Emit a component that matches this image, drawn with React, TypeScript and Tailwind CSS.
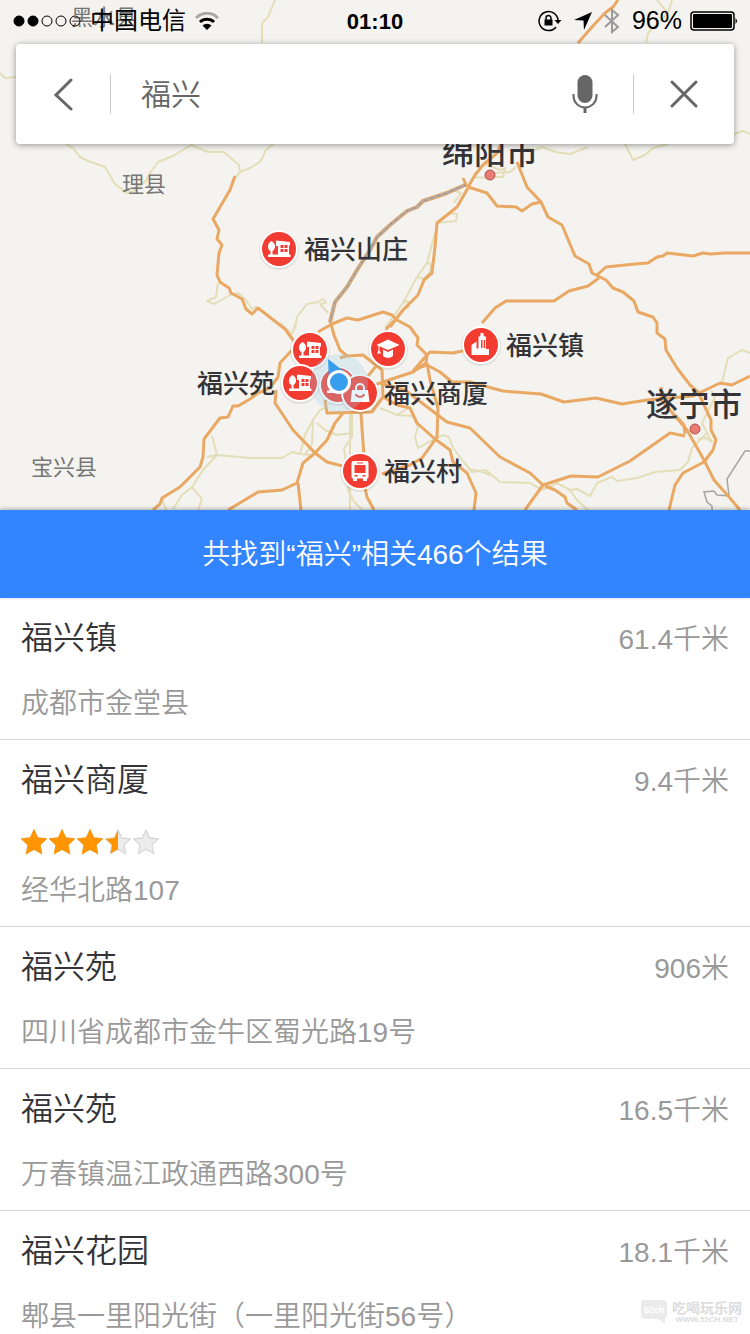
import type { ReactNode } from 'react'

type PinKind = 'house' | 'school' | 'town' | 'shop' | 'bus'

interface Pin {
  x: number
  y: number
  kind: PinKind
  label?: string
  labelX?: number
}

interface Place {
  id: number
  name: string
  distance: string
  address: string
  rating?: number
}

const places: Place[] = [
  { id: 1, name: '福兴镇', distance: '61.4千米', address: '成都市金堂县' },
  { id: 2, name: '福兴商厦', distance: '9.4千米', address: '经华北路107', rating: 3.5 },
  { id: 3, name: '福兴苑', distance: '906米', address: '四川省成都市金牛区蜀光路19号' },
  { id: 4, name: '福兴苑', distance: '16.5千米', address: '万春镇温江政通西路300号' },
  { id: 5, name: '福兴花园', distance: '18.1千米', address: '郫县一里阳光街（一里阳光街56号）' },
]

const pins: Pin[] = [
  { x: 279, y: 249, kind: 'house', label: '福兴山庄', labelX: 304 },
  { x: 310, y: 350, kind: 'house' },
  { x: 388, y: 349, kind: 'school' },
  { x: 481, y: 345, kind: 'town', label: '福兴镇', labelX: 506 },
  { x: 300, y: 383, kind: 'house', label: '福兴苑', labelX: 197 },
  { x: 338, y: 385, kind: 'house' },
  { x: 360, y: 393, kind: 'shop', label: '福兴商厦', labelX: 384 },
  { x: 360, y: 471, kind: 'bus', label: '福兴村', labelX: 384 },
]

const minorRoads = [
  '66,144 73,148 80,157 88,161 105,167 115,184 127,193 135,190 146,181 150,173 158,162 173,156 191,145 208,152 224,152 239,165 240,172 235,178',
  '240,172 250,168 260,162 266,150 273,144',
  '275,0 268,17 262,23 262,43',
  '0,73 5,78 16,77',
  '657,0 668,13 672,0',
  '668,13 648,33 646,43',
  '734,134 743,131 750,134',
  '218,283 216,297 207,301 214,304 230,295 238,293 246,300 252,309 257,306',
  '212,436 217,455 207,457',
  '217,455 250,458 282,458 292,452 300,454 305,435 313,420 320,410 327,407',
  '300,454 312,455',
  '217,455 203,470 192,487 202,499 198,510',
  '192,487 182,495 173,509',
  '162,498 166,510',
  '317,423 325,430 337,435 352,433',
  '352,414 352,437 344,448 347,470 348,490 355,503 363,510',
  '350,414 350,510',
  '313,420 312,444 305,455',
  '380,408 397,415 413,416 418,427 415,437 418,448 427,443 443,435 449,437 453,448 463,461 472,472 486,470 500,482 530,483 542,490 557,483 570,490 577,489 590,496 597,483 612,477 617,481 637,478 655,472 680,470 688,462 692,448 707,433 702,423 715,397 711,390',
  '397,415 407,409',
  '468,469 480,471 490,475',
  '722,382 728,358 742,350 750,353',
  '570,490 577,500 588,510',
  '526,148 535,150 542,147 556,152 570,154 588,147',
  '625,144 633,160 645,155 653,148 668,144',
  '295,329 297,317 307,304 318,302 323,299 326,303 320,304 328,313',
  '435,233 427,263 417,277 403,303 385,328',
  '427,263 431,264 430,272 424,279 417,277',
  '403,303 408,301 409,307 400,312',
  '437,223 456,221 457,214 448,213',
  '450,189 461,193 454,203',
  '474,177 487,178 495,173 510,172 516,167',
  '485,164 500,170 505,168 503,177 495,177',
  '280,323 292,334 296,322',
  '707,433 712,442 706,438 698,439',
]

const majorRoads = [
  '235,176 230,190 213,219 219,230 217,239 222,245 219,253 217,275 220,282 229,288 231,293 242,299 246,309 252,314 258,308 285,329 293,340 300,350',
  '300,346 292,350 280,363 278,377 270,388 258,393 250,399 238,406 233,406 228,417 220,418 204,439 203,457 200,467 180,487 162,498 160,504 153,510',
  '276,390 275,403 293,430 315,453 327,462 350,468',
  '343,413 335,423 327,440 315,453 303,463 297,483 282,490 258,492 228,510',
  '298,483 301,510',
  '340,358 347,356 363,355 382,370 383,397 372,412 327,413 325,400',
  '330,320 334,335 340,350 347,356',
  '318,332 332,324 347,318 358,320 383,312 392,315 397,320 410,327 418,338 417,345 427,355 426,363 413,372 380,383 360,390',
  '395,320 387,328 383,340',
  '377,365 368,376 358,383',
  '427,355 430,352 453,353 467,350',
  '427,355 413,371',
  '482,323 495,308 506,301 554,301 569,291 588,286 599,278',
  '596,276 606,267 635,264 648,263 657,257 663,256 667,253 693,256 703,253 710,254 725,253 750,253',
  '517,162 527,187 541,202 548,217 562,225 575,256 589,264 592,273 606,280 613,288 623,292 634,301 638,312 653,317 657,323 657,333 665,339 666,350 677,368 690,385 698,392 711,420 711,430 716,440 713,450 704,462 683,473 675,485 669,510',
  '468,187 487,193 497,206 516,207 522,211 532,204 541,202',
  '468,187 475,175 483,165 497,153 503,140',
  '463,178 467,187',
  '578,43 592,27 605,13 613,7 618,0',
  '468,188 457,207 437,223 435,247 432,273 424,280 418,295 403,310 390,327',
  '418,368 427,365 440,372 452,382 470,382 488,387 503,391 541,394 564,402 596,398 622,404 647,400 693,396 720,383 732,385 750,376',
  '383,397 397,405 410,408 417,423 435,439 450,450 453,462 467,473 476,493 474,510',
  '427,363 430,380 438,408 437,437 422,458 410,465 382,474',
  '380,383 405,390 418,400 447,422 470,428 500,457 530,473 543,485 525,510',
  '543,485 571,476 598,477 630,461 670,433 685,436',
  '545,486 555,490 565,497 567,503 577,510',
  '661,387 661,400 670,410 687,430 704,460 714,480 729,497 740,510',
  '676,416 684,425 685,434',
  '361,413 364,457',
  '365,488 367,497 374,510',
]

const railway =
  '465,185 447,193 423,201 417,207 407,211 390,225 377,237 370,250 357,270 347,287 335,302 330,322'

const starPath = 'M12 1l3.4 7.2 7.9 1-5.8 5.5 1.5 7.8-7-3.8-7 3.8 1.5-7.8L.7 9.2l7.9-1z'

function HouseGlyph() {
  return (
    <>
      <path d="M-7.500-8q4 2 3.500 6.500Q-5 1.500-6.500 2v4h-2V2Q-10.500 1.500-11-1.500-11.500-6-7.500-8z" />
      <path d="M-11 5.500H11.500V8H-11z" />
      <path d="M-3-8.500L11-7v3.500h-1V7H-1V-3h-2z" />
      <path d="M1.500-4h3v3h-3zM5.500-4h3v3h-3zM1.500 0h3v3h-3zM5.500 0h3v3h-3z" fill="#f23c32" />
    </>
  )
}

function SchoolGlyph() {
  return (
    <>
      <path d="M0-9.500L11.500-4 0 1-11.500-4z" />
      <path d="M-9.500-4v5.500l-1.500 3h4l-1.500-3V-3z" />
      <path d="M-5 .5l5 2.500L5 .5V7q-5 4-10 0z" />
    </>
  )
}

function TownGlyph() {
  return (
    <>
      <path d="M-9.500 0l5-3.500v7h2V-8l2-1.500V-12h3v2.500L5-8V4h3v6H-9.500z" />
      <path d="M0-5h1.500v8H0zM2.700-5h1.500v8H2.700z" fill="#f23c32" />
    </>
  )
}

function ShopGlyph() {
  return (
    <>
      <path d="M-8-3H8L9.500 9h-19z" />
      <path d="M-4-2v-3a4 4 0 0 1 8 0v3" fill="none" stroke="#fff" strokeWidth="2" />
      <path d="M-4.500 1.500q4.500 5 9 0" fill="none" stroke="#f23c32" strokeWidth="2" />
    </>
  )
}

function BusGlyph() {
  return (
    <>
      <path d="M-6.500-10H6.500Q8.500-10 8.500-8V6q0 1.500-1.500 1.500V10H3V7.500h-6V10h-4V7.500Q-8.500 7.500-8.500 6V-8q0-2 2-2z" />
      <path d="M-5.500-6h11V2h-11zM-3-8.500h6v1h-6zM-5.500 4h3v1.500h-3zM2.500 4h3v1.500h-3z" fill="#f23c32" />
    </>
  )
}

const glyphs: Record<PinKind, ReactNode> = {
  house: <HouseGlyph />,
  school: <SchoolGlyph />,
  town: <TownGlyph />,
  shop: <ShopGlyph />,
  bus: <BusGlyph />,
}

function MapView() {
  return (
    <svg
      viewBox="0 0 750 510"
      preserveAspectRatio="xMidYMid slice"
      className="col-start-1 row-start-1 h-full w-full bg-[#f4f3ef]"
      role="img"
      aria-label="地图"
    >
      <g fill="none" stroke="#e4deb8" strokeWidth="2" strokeLinejoin="round">
        {minorRoads.map((points) => (
          <polyline key={points} points={points} />
        ))}
      </g>
      <polyline
        points="750,451 745,451 727,479 729,496 717,495 714,491 704,492 707,502 712,506 712,510"
        fill="none"
        stroke="#a5a5a5"
        strokeWidth="1.5"
      />
      <g fill="none" stroke="#e9a863" strokeWidth="3" strokeLinejoin="round">
        {majorRoads.map((points) => (
          <polyline key={points} points={points} />
        ))}
        <polyline points={railway} strokeWidth="4" />
        <polyline points={railway} stroke="#b5a9a0" strokeWidth="2.5" />
        <polyline points={railway} stroke="#8d6b66" strokeWidth="1" strokeDasharray="1 6" />
      </g>

      <g fill="#777" fontSize="22">
        <text x="71" y="25">黑水县</text>
        <text x="122" y="192">理县</text>
        <text x="31" y="475">宝兴县</text>
      </g>
      <g fill="#ea7a74" stroke="#b5504b" strokeWidth="1">
        <circle cx="490" cy="175" r="5" />
        <circle cx="695" cy="429" r="5" />
      </g>
      <g fill="#333338" fontSize="32" fontWeight="500">
        <text x="442" y="164">绵阳市</text>
        <text x="646" y="416">遂宁市</text>
      </g>

      {pins.map((pin) => (
        <g key={`${pin.x}-${pin.y}`}>
          <g transform={`translate(${pin.x} ${pin.y})`} fill="#fff">
            <circle cy="1" r="20" fill="#000" opacity="0.08" />
            <circle r="19" />
            <circle r="17" fill="#f23c32" />
            {glyphs[pin.kind]}
          </g>
          {pin.label && (
            <text x={pin.labelX} y={pin.y + 10} fill="#333338" fontSize="26" fontWeight="500">
              {pin.label}
            </text>
          )}
        </g>
      ))}

      {/* current position, with its heading */}
      <circle cx="339" cy="383" r="29" fill="#9fd0ea" opacity="0.28" />
      <path d="M328 359l18 14-17 8z" fill="#379eee" />
      <circle cx="339" cy="382" r="12" fill="#fff" />
      <circle cx="339" cy="382" r="9" fill="#379eee" />
    </svg>
  )
}

function StatusBar() {
  return (
    <div className="grid h-[42px] grid-cols-3 items-center px-3 text-black">
      <div className="flex items-center">
        <svg width="70" height="12" viewBox="0 0 70 12" fill="none" stroke="#000" strokeWidth="1">
          <circle cx="7" cy="6" r="5" fill="#000" />
          <circle cx="21" cy="6" r="5" fill="#000" />
          <circle cx="35" cy="6" r="5" />
          <circle cx="49" cy="6" r="5" />
          <circle cx="63" cy="6" r="5" />
        </svg>
        <span className="ml-2 text-2xl">中国电信</span>
        <svg className="ml-2 shrink-0" width="26" height="18" viewBox="0 0 26 18" fill="none" strokeWidth="3">
          <path d="M2 6a15 15 0 0 1 22 0" stroke="#a8a8a6" />
          <path d="M6 10a10 10 0 0 1 14 0" stroke="#000" />
          <path d="M13 18l-4.500-4.500a6.500 6.500 0 0 1 9 0z" fill="#000" />
        </svg>
      </div>
      <span className="text-center text-[22px] font-bold">01:10</span>
      <div className="flex items-center justify-end gap-2">
        <svg width="24" height="22" viewBox="0 0 24 22" fill="none" stroke="#000" strokeWidth="1.500">
          <path d="M18 17a9.500 9.500 0 1 1 2-7" />
          <path d="M16.500 10h7L20 14z" fill="#000" stroke="none" />
          <path d="M6.500 9.500h8v6h-8z" fill="#000" stroke="none" />
          <path d="M8 10V8a2.500 2.500 0 0 1 5 0v2" />
        </svg>
        <svg className="ml-1" width="18" height="18" viewBox="0 0 18 18">
          <path d="M18 0L10 18 9.500 8.500 0 8z" />
        </svg>
        <svg className="mx-1" width="16" height="26" viewBox="0 0 16 26" fill="none" stroke="#999" strokeWidth="2">
          <path d="M1 7l13 12-6 5V2l6 5L1 19" />
        </svg>
        <span className="text-[25px]">96%</span>
        <svg className="shrink-0" width="48" height="20" viewBox="0 0 48 20">
          <rect x="1" y="1" width="43" height="18" rx="3" fill="none" stroke="#000" strokeWidth="1.500" />
          <rect x="3" y="3" width="39" height="14" rx="1" />
          <path d="M45.500 7q3 3 0 6z" />
        </svg>
      </div>
    </div>
  )
}

function SearchBar() {
  return (
    <form className="mx-4 mt-0.5 flex h-[100px] items-center rounded bg-white shadow-[0_1px_6px_rgba(0,0,0,0.4)]">
      <button type="button" aria-label="返回" className="flex h-full w-[94px] items-center justify-center">
        <svg width="22" height="34" viewBox="0 0 22 34" fill="none" stroke="#666" strokeWidth="3" strokeLinecap="round">
          <path d="M19 3L4 18l15 14" />
        </svg>
      </button>
      <span className="h-10 w-px bg-[#ccc]" />
      <input
        aria-label="搜索"
        defaultValue="福兴"
        className="min-w-0 flex-1 bg-transparent pl-[30px] text-[30px] font-[350] text-[#666] outline-none"
      />
      <button type="button" aria-label="语音搜索" className="flex h-full w-24 items-center justify-center">
        <svg width="26" height="40" viewBox="0 0 26 40">
          <rect x="5.500" y="1" width="15" height="28" rx="7.500" fill="#666" />
          <path d="M1.500 20v2a11.500 11.500 0 0 0 23 0v-2" fill="none" stroke="#666" strokeWidth="2" />
          <path d="M13 33v6" stroke="#666" strokeWidth="3" />
        </svg>
      </button>
      <span className="h-10 w-px bg-[#ccc]" />
      <button type="button" aria-label="清除" className="flex h-full w-[100px] items-center justify-center">
        <svg width="28" height="28" viewBox="0 0 28 28" stroke="#666" strokeWidth="3" strokeLinecap="round">
          <path d="M2 2l24 24M26 2L2 26" />
        </svg>
      </button>
    </form>
  )
}

function Stars({ value }: { value: number }) {
  return (
    <div className="mt-[29px] -mb-[10px] flex gap-0.5" role="img" aria-label={`${value}星`}>
      {[0, 1, 2, 3, 4].map((i) => (
        <svg key={i} width="26" height="26" viewBox="0 0 24 24">
          <path d={starPath} fill="#ececec" stroke="#d2d2d2" strokeWidth="1" />
          {value >= i + 1 && <path d={starPath} fill="#ff9500" stroke="#ff9500" />}
          {value > i && value < i + 1 && (
            <path d="M12 1v17.700l-7 3.800 1.500-7.800L.7 9.200l7.900-1z" fill="#ff9500" />
          )}
        </svg>
      ))}
    </div>
  )
}

function PlaceRow({ place }: { place: Place }) {
  return (
    <li className="border-b border-[#d6d6d6] px-[21px] pt-5 pb-[19px]">
      <div className="flex h-10 items-baseline justify-between">
        <h2 className="text-[32px] leading-10 font-[350] text-[#333338]">{place.name}</h2>
        <span className="text-[28px] leading-10 font-[350] text-[#999]">{place.distance}</span>
      </div>
      {place.rating !== undefined && <Stars value={place.rating} />}
      <p className="mt-[30px] text-[28px] leading-8 font-[350] text-[#999]">{place.address}</p>
    </li>
  )
}

function Watermark() {
  return (
    <div className="pointer-events-none absolute right-2 bottom-2 flex items-center gap-1 text-[#dcdcdc]">
      <svg width="28" height="28" viewBox="0 0 28 28">
        <path d="M4 2h19q4 0 4 4v10q0 3-2 4v6l-7-5H5q-4 0-4-4V6q0-4 3-4z" fill="#ebebeb" />
        <text x="4" y="15" fontSize="9" fontWeight="700" fill="#fff">52ch</text>
      </svg>
      <div className="flex flex-col items-center">
        <span className="text-sm leading-4 font-bold">吃喝玩乐网</span>
        <span className="text-[8px] leading-2 font-bold">WWW.52CH.NET</span>
      </div>
    </div>
  )
}

export default function App() {
  return (
    <div className="relative flex h-screen flex-col overflow-hidden bg-white font-['Liberation_Sans','Noto_Sans_CJK_SC',sans-serif]">
      <header className="grid h-[510px] shrink-0 grid-cols-1 grid-rows-[510px] overflow-hidden">
        <MapView />
        <div className="z-10 col-start-1 row-start-1">
          <StatusBar />
          <SearchBar />
        </div>
      </header>
      <p className="z-10 flex h-[88px] shrink-0 items-center justify-center bg-[#3385ff] pt-0.5 text-[28px] font-[350] text-white shadow-[0_-1px_4px_rgba(0,0,0,0.3)]">
        共找到“福兴”相关466个结果
      </p>
      <ul className="min-h-0 flex-1 overflow-y-auto [scrollbar-width:none]">
        {places.map((place) => (
          <PlaceRow key={place.id} place={place} />
        ))}
      </ul>
      <Watermark />
    </div>
  )
}
